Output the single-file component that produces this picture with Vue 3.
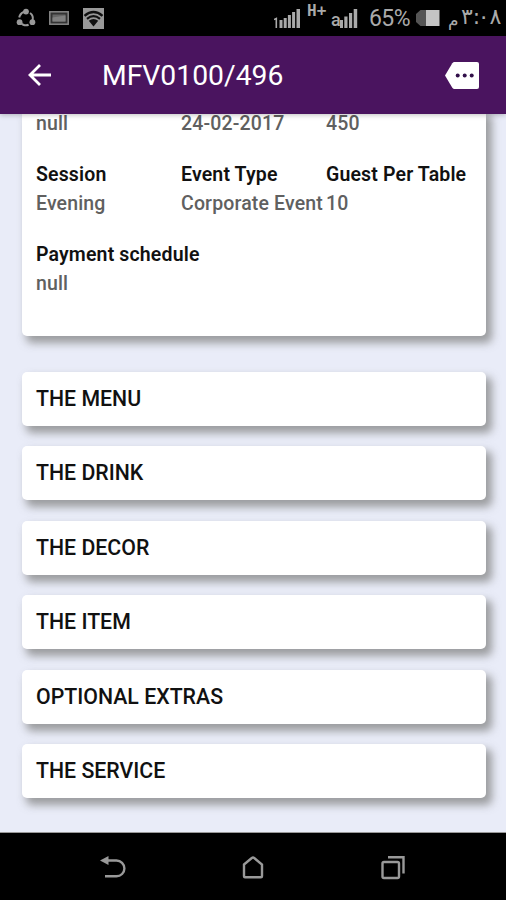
<template>
  <div class="screen">
    <div class="status-bar">
      <div class="status-left">
        <svg class="share-icon" viewBox="0 0 20 20">
          <circle cx="10" cy="10.5" r="6.8" fill="none" stroke="#999" stroke-width="2" stroke-dasharray="8.5 5.74" stroke-dashoffset="-1.5" transform="rotate(-66 10 10.5)" />
          <circle cx="10" cy="3.6" r="2.9" />
          <circle cx="3.6" cy="14.2" r="2.9" />
          <circle cx="16.4" cy="14.2" r="2.9" />
        </svg>
        <svg class="screen-icon" viewBox="0 0 20 14">
          <rect x=".8" y=".8" width="18.4" height="12.4" fill="#333" stroke="#888" stroke-width="1.5" />
          <rect x="3.5" y="3.5" width="13" height="7" fill="#666" />
          <path d="M3.5 10.5v-4l13-2v6z" fill="#808080" />
        </svg>
        <svg class="wifi-icon" viewBox="0 0 21 21">
          <rect width="21" height="21" fill="#999" />
          <path d="M1.5 7.8q9-7.5 18 0" fill="none" stroke="#111" stroke-width="2.4" />
          <path d="M4 10.8q6.5-5.2 13 0" fill="none" stroke="#111" stroke-width="2.2" />
          <path d="M5.8 12.8q4.7-3.6 9.4 0L10.5 18.5z" fill="#111" />
        </svg>
      </div>
      <div class="status-right">
        <svg class="signal-icon" viewBox="0 0 27 21">
          <path d="M0 11.500l2.300-1v9.500" fill="none" stroke="#aaa" stroke-width="1.600" />
          <path d="M5.500 12h3v8h-3zM9.700 10h3v10h-3zM13.900 7h3v13h-3zM18.100 4h3v16h-3zM22.500 1h3.500v19h-3.500z" />
        </svg>
        <span class="network">H+</span>
        <div class="signal-two">
          <span class="roam">a</span>
          <svg class="signal-bars" viewBox="0 0 18 21">
            <path d="M0 12h3v8H0zM4.300 8.500h3.200V20H4.300zM9 5h3.200v15H9zM13.700 1h3.500v19h-3.500z" />
          </svg>
        </div>
        <span class="percent">65%</span>
        <svg class="battery-icon" viewBox="0 0 24 16">
          <path d="M10 0v16H4.500L0 12V4l4.500-4z" fill="#555" />
          <rect x="10" width="13.500" height="16" fill="#c4c4c4" />
        </svg>
        <span class="meridiem">م</span>
        <span class="clock"><span>٣</span><span>:</span><span>٠</span><span>٨</span></span>
      </div>
    </div>

    <header class="toolbar">
      <svg class="back-icon" viewBox="0 0 24 22">
        <path d="M23 11H2M12 1L2 11l10 10" fill="none" stroke="#fff" stroke-width="2.800" />
      </svg>
      <h1 class="title">{{ title }}</h1>
      <svg class="more-icon" viewBox="0 0 34 27">
        <path d="M9.500 0H32q2 0 2 2v23q0 2-2 2H9.500q-1.300 0-2.200-1.200L0 13.500 7.300 1.200Q8.200 0 9.500 0z" fill="#fff" />
        <g fill="#32104a">
          <circle cx="12.700" cy="13.500" r="2" />
          <circle cx="19.700" cy="13.500" r="2" />
          <circle cx="26.700" cy="13.500" r="2" />
        </g>
      </svg>
    </header>

    <main class="content">
      <section class="details">
        <div class="details-row" v-for="(row, index) in rows" :key="index">
          <div class="field" v-for="field in row" :key="field.label">
            <div class="label" v-if="field.label">{{ field.label }}</div>
            <div class="value">{{ field.value }}</div>
          </div>
        </div>
      </section>

      <div class="sections">
        <button class="section" v-for="name in sections" :key="name">
          {{ name }}
        </button>
      </div>
    </main>

    <nav class="nav-bar">
      <svg class="nav-icon" viewBox="0 0 26 24">
        <path d="M5 4.500h11.500a7.700 7.700 0 0 1 0 15.800H5" />
        <path class="solid" d="M0 4.500l8.500-4.500v9z" />
      </svg>
      <svg class="nav-icon" viewBox="0 0 26 24">
        <path d="M4 8.500L11.800 2q1.200-.9 2.400 0L22 8.500v11.800q0 1-1 1H5q-1 0-1-1z" />
      </svg>
      <svg class="nav-icon" viewBox="0 0 26 24">
        <rect x="2.500" y="6" width="16.500" height="16" rx="1.500" />
        <path d="M8 1.300h15.500V17.500" />
      </svg>
    </nav>
  </div>
</template>

<script setup>
import { ref } from "vue";

const title = ref("MFV0100/496");

const rows = ref([
  [{ value: "null" }, { value: "24-02-2017" }, { value: "450" }],
  [
    { label: "Session", value: "Evening" },
    { label: "Event Type", value: "Corporate Event" },
    { label: "Guest Per Table", value: "10" },
  ],
  [{ label: "Payment schedule", value: "null" }],
]);

const sections = [
  "THE MENU",
  "THE DRINK",
  "THE DECOR",
  "THE ITEM",
  "OPTIONAL EXTRAS",
  "THE SERVICE",
];
</script>

<style>
body {
  margin: 0;
  background: #000;
}
</style>

<style scoped>
.screen {
  display: flex;
  flex-direction: column;
  width: 506px;
  height: 900px;
  overflow: hidden;
  font-family: Roboto, "Noto Sans", sans-serif;
  background: #e9ecf8;
}

svg {
  display: block;
  flex: none;
}

/* 状态栏 */
.status-bar {
  display: flex;
  justify-content: space-between;
  box-sizing: border-box;
  height: 36px;
  padding: 0 8px 0 16px;
  color: #aaa;
  background: #000;
}

.status-left,
.status-right {
  display: flex;
  align-items: center;
}

.share-icon {
  width: 20px;
  height: 20px;
  fill: #999;
}

.screen-icon {
  width: 20px;
  height: 14px;
  margin-left: 13px;
}

.wifi-icon {
  width: 21px;
  height: 21px;
  margin-left: 14px;
}

.signal-icon {
  width: 27px;
  height: 21px;
  fill: #aaa;
}

.network {
  width: 20px;
  margin: 0 4px 14px 6px;
  font: bold 16px/16px "DejaVu Sans Mono", monospace;
}

.signal-two {
  display: flex;
  align-items: flex-end;
  height: 21px;
}

.roam {
  width: 9px;
  font-size: 18px;
  font-weight: 500;
  line-height: 18px;
}

.signal-bars {
  width: 18px;
  height: 21px;
  fill: #aaa;
}

.percent {
  width: 41px;
  margin-left: 11px;
  font-size: 23px;
  letter-spacing: -0.6px;
}

.battery-icon {
  width: 24px;
  height: 16px;
  margin-left: 6px;
}

.meridiem {
  width: 9px;
  margin-left: 8px;
  padding-top: 4px;
  font: 17px/24px "DejaVu Sans", sans-serif;
}

.clock {
  display: flex;
  direction: ltr;
  width: 37px;
  margin-left: 4px;
  padding-bottom: 3px;
  font: 22px/24px "DejaVu Sans", sans-serif;
  letter-spacing: -2.6px;
}

/* 顶部导航 */
.toolbar {
  z-index: 1;
  display: flex;
  align-items: center;
  flex: none;
  box-sizing: border-box;
  height: 78px;
  padding: 0 27px 0 28px;
  background: #4a145f;
  box-shadow: 0 1px 5px rgba(0, 0, 0, 0.25);
}

.back-icon {
  width: 24px;
  height: 22px;
}

.title {
  flex: 1;
  margin: 2px 0 0 50px;
  color: #fff;
  font-size: 28.3px;
  font-weight: 400;
  line-height: 40px;
}

.more-icon {
  width: 34px;
  height: 27px;
}

.content {
  box-sizing: border-box;
  height: 719px;
  padding: 0 20px 0 22px;
  overflow: hidden;
  border-bottom: 1px solid #999;
}

.details,
.section {
  background: #fff;
  border-radius: 5px;
  box-shadow: 5px 6px 8px 1px rgba(95, 95, 90, 0.56);
}

.details {
  display: flex;
  flex-direction: column;
  gap: 21px;
  box-sizing: border-box;
  height: 227px;
  margin-top: -5px;
  padding: 0 14px;
}

.details-row {
  display: grid;
  grid-template-columns: repeat(3, 145px);
}

.label,
.value {
  font-size: 19.5px;
  font-weight: 500;
  line-height: 29.5px;
  letter-spacing: 0.15px;
  white-space: nowrap;
}

.label {
  color: #111;
  font-weight: 600;
}

.value {
  color: #606060;
}

.sections {
  display: flex;
  flex-direction: column;
  gap: 20.5px;
  margin-top: 35.5px;
}

.section {
  height: 54px;
  padding: 0 14px 1px;
  border: 0;
  color: #111;
  font-family: inherit;
  font-size: 21.3px;
  font-weight: 500;
  text-align: left;
}

/* 底部按键 */
.nav-bar {
  display: flex;
  align-items: center;
  justify-content: space-between;
  flex: 1;
  padding: 2px 100px 0;
  background: #000;
}

.nav-icon {
  width: 26px;
  height: 24px;
  fill: none;
  stroke: #999;
  stroke-width: 2.4;
}

.nav-icon .solid {
  fill: #999;
  stroke: none;
}
</style>
